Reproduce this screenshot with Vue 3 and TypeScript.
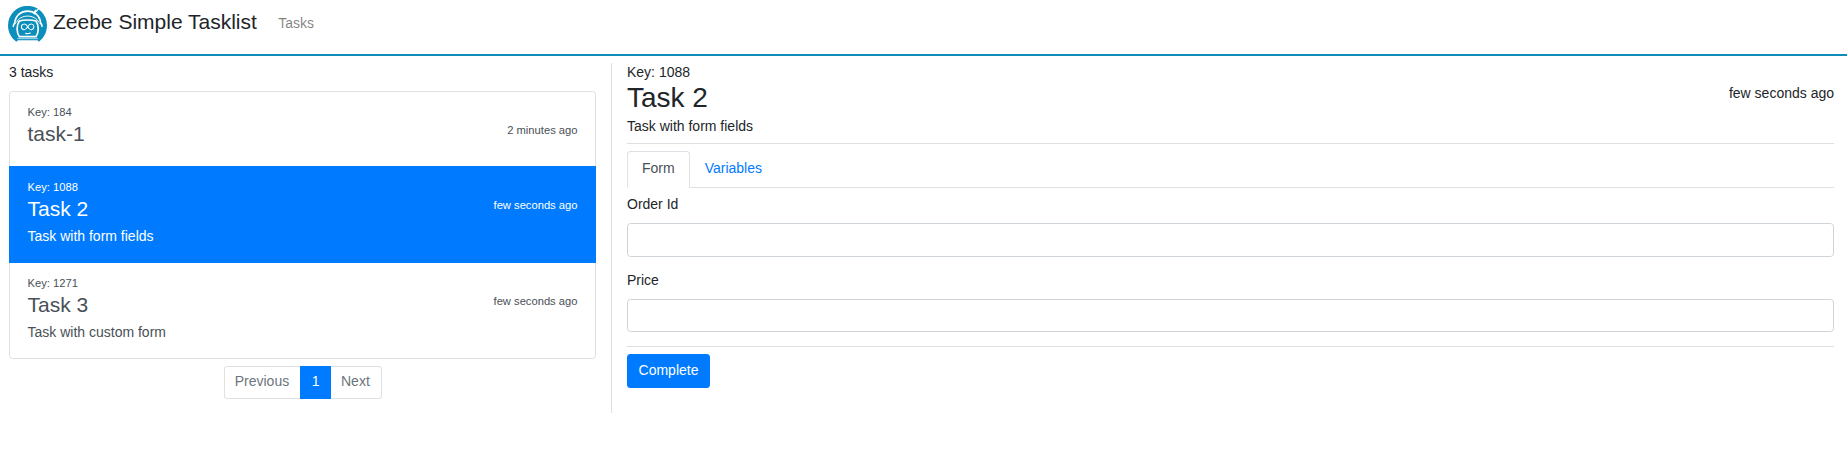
<script setup lang="ts">
import { computed, ref } from 'vue'

interface Task {
  key: number
  name: string
  description?: string
  created: string
}

const tasks: Task[] = [
  { key: 184, name: 'task-1', created: '2 minutes ago' },
  { key: 1088, name: 'Task 2', description: 'Task with form fields', created: 'few seconds ago' },
  { key: 1271, name: 'Task 3', description: 'Task with custom form', created: 'few seconds ago' },
]

const selectedKey = ref(1088)
const selected = computed(() => tasks.find((t) => t.key === selectedKey.value) ?? tasks[0])
const fields = ref([
  { id: 'orderId', label: 'Order Id', value: '' },
  { id: 'price', label: 'Price', value: '' },
])
</script>

<template>
  <div class="page">
    <nav class="navbar">
      <svg class="logo" viewBox="24 18 117 108" aria-hidden="true">
        <path d="M49 125C33 114 24 96 24 76a58 58 0 0 1 117 0c0 20-9 38-24 49l-5-4H54z" fill="#0c8fbc" />
        <g fill="none" stroke="#fff" stroke-linecap="round" stroke-linejoin="round">
          <path d="M44 70C48 21 118 21 122 70" stroke-width="5" />
          <path d="M103 40l4-8" stroke-width="6" />
          <path d="M108 35l8-9" stroke-width="3.5" />
          <path d="M40 79c0-6 2-8 5-9M126 79c0-6-2-8-5-9" stroke-width="5" />
          <path d="M50 66C61 42 105 42 116 66" stroke-width="3" />
          <path d="M58 63c-9 13-9 34 0 47h50c9-13 9-34 0-47C97 59 69 59 58 63z" stroke-width="5" />
          <path d="M53 116h60" stroke-width="2" />
          <path d="M83 80c-4-7-8-9-12-8-9 2-9 15 0 17 4 1 8-2 12-9 4-7 8-9 12-8 9 2 9 15 0 17-4 1-8-2-12-9z" stroke-width="3.2" />
          <path d="M77 100q6 2 14-1" stroke-width="3.5" />
        </g>
      </svg>
      <a class="brand">Zeebe Simple Tasklist</a>
      <a class="nav-link">Tasks</a>
    </nav>

    <main class="content">
      <section class="sidebar">
        <div class="count">{{ tasks.length }} tasks</div>
        <div class="list">
          <a
            v-for="task in tasks"
            :key="task.key"
            class="item"
            :class="{ active: task.key === selectedKey }"
            @click="selectedKey = task.key"
          >
            <div class="item-head">
              <div>
                <small class="key">Key: {{ task.key }}</small>
                <h4>{{ task.name }}</h4>
              </div>
              <small class="time">{{ task.created }}</small>
            </div>
            <p v-if="task.description">{{ task.description }}</p>
          </a>
        </div>
        <div class="pagination">
          <span class="page-link">Previous</span>
          <span class="page-link current">1</span>
          <span class="page-link">Next</span>
        </div>
      </section>

      <section class="detail">
        <div class="detail-head">
          <div>
            <div>Key: {{ selected.key }}</div>
            <h2>{{ selected.name }}</h2>
          </div>
          <span>{{ selected.created }}</span>
        </div>
        <p class="description">{{ selected.description }}</p>
        <div class="tabs">
          <a class="tab open">Form</a>
          <a class="tab">Variables</a>
        </div>
        <form @submit.prevent>
          <div v-for="field in fields" :key="field.id" class="group">
            <label :for="field.id">{{ field.label }}</label>
            <input :id="field.id" v-model="field.value" type="text" />
          </div>
          <div class="actions">
            <button type="submit">Complete</button>
          </div>
        </form>
      </section>
    </main>
  </div>
</template>

<style>
body {
  margin: 0;
  background: #fff;
}
</style>

<style scoped>
.page,
.page * {
  box-sizing: border-box;
}
.page {
  font: 14px/21px "Liberation Sans", Arial, sans-serif;
  color: #212529;
}
h2,
h4,
p {
  margin: 0;
  font-weight: 400;
}
.navbar {
  display: flex;
  align-items: flex-start;
  height: 56px;
  padding: 6px 8px 0;
  border-bottom: 2px solid #0f8cba;
}
.logo {
  width: 39px;
  height: 36px;
}
.brand {
  margin-left: 6px;
  font-size: 21px;
  line-height: 31.5px;
}
.nav-link {
  margin: 7px 0 0 21.3px;
  color: rgba(0, 0, 0, 0.5);
}
.content {
  display: flex;
  padding-top: 7px;
}
.sidebar {
  width: 611px;
  padding: 0 15px 0 9px;
}
.count {
  height: 28px;
  margin-top: -1px;
}
.list {
  margin-top: 1px;
  border: 1px solid #dfdfdf;
  border-radius: 3.5px;
}
.item {
  display: block;
  height: 96px;
  padding: 10px 17.5px 0;
  color: #495057;
}
.item:first-child {
  height: 74px;
}
.item:last-child {
  height: 95px;
}
.item.active {
  height: 97px;
  margin: 0 -1px;
  padding: 11px 18.5px 0;
  color: #fff;
  background: #007bff;
}
.item-head {
  display: flex;
  justify-content: space-between;
  align-items: center;
  height: 46px;
}
small {
  display: block;
  font-size: 11.2px;
}
.key {
  line-height: 20px;
}
h4 {
  height: 26px;
  font-size: 21px;
  line-height: 23px;
}
.time {
  padding-top: 11px;
}
.item p {
  margin-top: 3px;
}
.pagination {
  display: flex;
  justify-content: center;
  margin-top: 7px;
  padding-left: 0.5px;
}
.page-link {
  height: 33px;
  padding: 4px 10.5px;
  border: 1px solid #dee2e6;
  color: #6c757d;
}
.page-link:first-child {
  padding-left: 10px;
  padding-right: 11px;
  border-right: 0;
  border-radius: 3.5px 0 0 3.5px;
}
.page-link:last-child {
  padding-left: 10px;
  padding-right: 11px;
  border-left: 0;
  border-radius: 0 3.5px 3.5px 0;
}
.page-link.current {
  border-color: #007bff;
  background: #007bff;
  color: #fff;
}
.detail {
  flex: 1;
  height: 350px;
  padding: 0 13px 0 15px;
  border-left: 1px solid #dfdfdf;
}
.detail-head {
  display: flex;
  justify-content: space-between;
  align-items: center;
  height: 54px;
  margin-top: -1px;
}
h2 {
  height: 33px;
  font-size: 28px;
  line-height: 30px;
}
.detail-head > span {
  padding-top: 8px;
}
.description {
  height: 28px;
  border-bottom: 1px solid #dfdfdf;
}
.tabs {
  display: flex;
  height: 37px;
  margin-top: 7px;
  border-bottom: 1px solid #dee2e6;
}
.tab {
  height: 37px;
  padding: 6px 14px;
  border: 1px solid transparent;
  border-radius: 3.5px 3.5px 0 0;
  color: #007bff;
}
.tab.open {
  border-color: #dee2e6 #dee2e6 #fff;
  background: #fff;
  color: #495057;
}
form {
  margin-top: 6px;
}
.group {
  height: 75.9px;
}
label {
  display: block;
  height: 29px;
}
input {
  display: block;
  width: 100%;
  height: 33.5px;
  padding: 5px 10px;
  border: 1px solid #ced4da;
  border-radius: 3.5px;
  font: inherit;
}
.actions {
  padding-top: 7px;
  border-top: 1px solid #dfdfdf;
}
button {
  display: block;
  width: 83px;
  height: 34px;
  padding: 0 0 1px;
  border: 0;
  border-radius: 3.5px;
  background: #007bff;
  color: #fff;
  font: inherit;
}
</style>
